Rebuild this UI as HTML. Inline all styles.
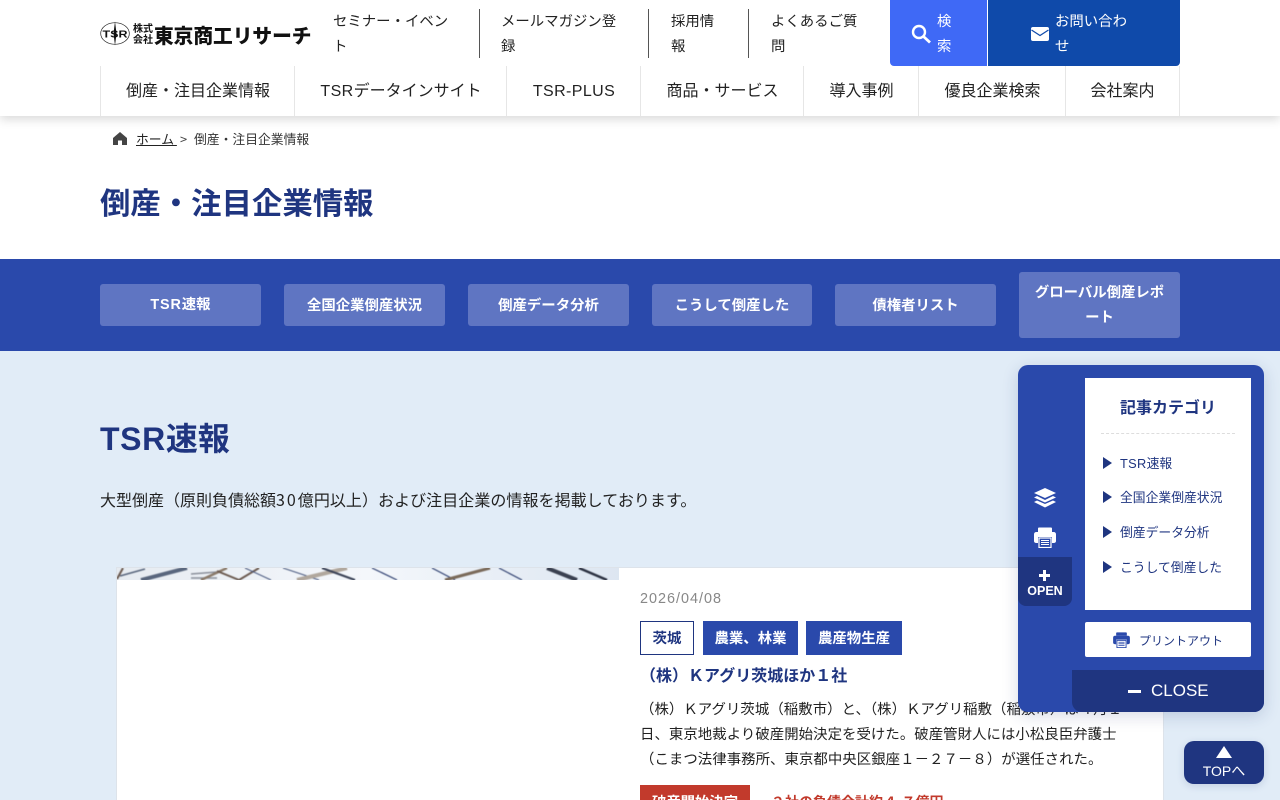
<!DOCTYPE html>
<html lang="ja"><head><meta charset="utf-8"><title>TSR速報</title>
<style>
*{box-sizing:border-box}
html,body{margin:0;padding:0;width:1280px;height:800px;overflow:hidden}
#w{position:absolute;left:0;top:0;width:1280px;height:800px;overflow:hidden;background:#e1ecf7;font-family:"Noto Sans CJK JP","Liberation Sans",sans-serif;color:#222}
.a{position:absolute;white-space:nowrap}
.l{font-family:"Liberation Sans",sans-serif;letter-spacing:.025em}
.lb{font-family:"Liberation Sans",sans-serif;letter-spacing:.06em;font-weight:700}
.c{position:absolute;display:flex;align-items:center;justify-content:center;text-align:center}
.nav{position:absolute;top:66px;height:50px;padding-bottom:4px;border-left:1px solid #e6e6e6;display:flex;align-items:center;justify-content:center;font-size:16px;color:#222;white-space:nowrap}
.top{position:absolute;top:8px;font-size:14.4px;line-height:25px;color:#222}
.sep{position:absolute;top:9px;width:1px;height:49px;background:#555}
.tab{position:absolute;background:#5f75c2;border-radius:3px;color:#fff;font-weight:700;font-size:14.4px;line-height:25px;padding-bottom:2px;display:flex;align-items:center;justify-content:center;text-align:center}
.tag{position:absolute;top:621px;height:34px;padding-bottom:2px;display:flex;align-items:center;justify-content:center;font-size:14.4px;font-weight:700;background:#2a49ab;color:#fff}
.li{position:absolute;left:1120px;font-size:12.8px;color:#1f3580;white-space:nowrap;line-height:18px}
.tri{position:absolute;left:1103px;width:0;height:0;border-left:9px solid #1f3580;border-top:6px solid transparent;border-bottom:6px solid transparent}
.ln{position:absolute;left:640px;font-size:14.4px;line-height:25px;letter-spacing:.06px;color:#222;white-space:nowrap}
</style></head><body><div id="w">
<div class="a" style="left:0;top:116px;width:1280px;height:143px;background:#fff"></div>
<div class="a" style="left:0;top:0;width:1280px;height:116px;background:#fff;box-shadow:0 3px 10px rgba(0,0,0,.16)"></div>

<svg class="a" style="left:100px;top:21px" width="30" height="25" viewBox="0 0 30 25"><ellipse cx="15" cy="12.500" rx="14.300" ry="10.800" fill="#fff" stroke="#222" stroke-width=".7"/><path d="M15 .5L16.500 12.500L15 24.500L13.500 12.500Z" fill="#111"/><text x="15" y="16.300" font-size="10.500" font-weight="700" text-anchor="middle" fill="#111" font-family="Liberation Sans,sans-serif" textLength="25" lengthAdjust="spacingAndGlyphs">TSR</text></svg>
<div class="a" style="left:133px;top:22px;font-size:10px;line-height:11px;font-weight:700;width:20px;color:#111">株式<br>会社</div>
<div class="a" style="left:154px;top:20px;font-size:19.700px;line-height:29px;font-weight:900;color:#111">東京商工リサーチ</div>

<div class="top" style="left:333px;width:125px">セミナー・イベント</div><div class="sep" style="left:479px"></div>
<div class="top" style="left:501px;width:126px">メールマガジン登録</div><div class="sep" style="left:648px"></div>
<div class="top" style="left:671px;width:56px">採用情報</div><div class="sep" style="left:748px"></div>
<div class="top" style="left:771px;width:98px">よくあるご質問</div>

<div class="a" style="left:890px;top:0;width:97px;height:66px;background:#3f69f6;border-radius:0 0 0 4px"></div>
<svg class="a" style="left:911px;top:24px" width="21" height="20" viewBox="0 0 21 20"><circle cx="8" cy="8" r="6" fill="none" stroke="#fff" stroke-width="2.400"/><path d="M12.500 12.500L19 18.500" stroke="#fff" stroke-width="2.800"/></svg>
<div class="a" style="left:937px;top:8px;width:15px;white-space:normal;font-size:14.400px;line-height:25px;color:#fff">検索</div>
<div class="a" style="left:988px;top:0;width:192px;height:66px;background:#0f4aaa;border-radius:0 0 4px 0"></div>
<svg class="a" style="left:1031px;top:27px" width="18" height="14" viewBox="0 0 18 14"><rect width="18" height="14" rx="2" fill="#fff"/><path d="M0.500 3L9 8.500L17.500 3" fill="none" stroke="#0f4aaa" stroke-width="1.200"/></svg>
<div class="a" style="left:1055px;top:8px;width:74px;white-space:normal;font-size:14.400px;line-height:25px;color:#fff">お問い合わせ</div>

<div class="nav" style="left:100px;width:195px">倒産・注目企業情報</div>
<div class="nav" style="left:294px;width:213px"><span><span class="l">TSR</span>データインサイト</span></div>
<div class="nav" style="left:506px;width:135px"><span><span class="l">TSR-PLUS</span></span></div>
<div class="nav" style="left:640px;width:164px">商品・サービス</div>
<div class="nav" style="left:803px;width:116px">導入事例</div>
<div class="nav" style="left:918px;width:148px">優良企業検索</div>
<div class="nav" style="left:1065px;width:115px;border-right:1px solid #e6e6e6">会社案内</div>

<svg class="a" style="left:113px;top:132px" width="14" height="13" viewBox="0 0 14 13"><path d="M7 0L14 6V13H9V8.500H5V13H0V6Z" fill="#444"/></svg>
<div class="a" style="left:136px;top:130px;font-size:12.800px;line-height:18px;color:#222"><span style="text-decoration:underline">ホーム&nbsp;</span></div>
<div class="a" style="left:180px;top:130px;font-size:12.800px;line-height:18px;color:#444">&gt;</div>
<div class="a" style="left:194px;top:130px;font-size:12.800px;line-height:18px;color:#333">倒産・注目企業情報</div>

<div class="a" style="left:100px;top:179px;font-size:30.400px;line-height:45px;font-weight:700;color:#1f3580">倒産・注目企業情報</div>

<div class="a" style="left:0;top:259px;width:1280px;height:92px;background:#2a49ab"></div>
<div class="tab" style="left:100px;top:284px;width:161px;height:42px"><span><span class="lb">TSR</span>速報</span></div>
<div class="tab" style="left:284px;top:284px;width:161px;height:42px">全国企業倒産状況</div>
<div class="tab" style="left:468px;top:284px;width:161px;height:42px">倒産データ分析</div>
<div class="tab" style="left:652px;top:284px;width:160px;height:42px">こうして倒産した</div>
<div class="tab" style="left:835px;top:284px;width:161px;height:42px">債権者リスト</div>
<div class="tab" style="left:1019px;top:272px;width:161px;height:66px;padding:0 12px 2px">グローバル倒産レポート</div>

<div class="a" style="left:100px;top:414px;font-size:32px;line-height:46px;font-weight:700;color:#1f3580"><span class="lb" style="letter-spacing:.02em">TSR</span>速報</div>
<div class="a" style="left:100px;top:486px;font-size:16px;line-height:26px;color:#222">大型倒産（原則負債総額<span style="letter-spacing:2px">30</span><span style="letter-spacing:.05px">億円以上）および注目企業の情報を掲載しております。</span></div>

<div class="a" style="left:116px;top:567px;width:1048px;height:233px;background:#fff;border:1px solid #dde3ea;border-bottom:0"></div>
<svg class="a" style="left:117px;top:568px" width="502" height="12" viewBox="0 0 502 12"><defs><linearGradient id="g" x1="0" x2="1"><stop offset="0" stop-color="#e6ebf1"/><stop offset=".5" stop-color="#f4f7fb"/><stop offset="1" stop-color="#dde6f1"/></linearGradient></defs><rect width="502" height="12" fill="url(#g)"/>
<g fill="none" style="filter:blur(.4px)"><path d="M0 11L6 0" stroke="#6b5a50" stroke-width="2"/><path d="M3 8L28 1" stroke="#59667d" stroke-width="1.500"/><path d="M24 12L70 0" stroke="#59667d" stroke-width="4"/><path d="M74 6L100 4M74 10L100 10" stroke="#8a8f9a" stroke-width="1.500"/><path d="M84 12L110 0" stroke="#8a7a6a" stroke-width="2.500"/><path d="M100 3L122 12M122 12L142 0" stroke="#6b5a50" stroke-width="2"/><path d="M128 0L154 12" stroke="#4a5a80" stroke-width="1"/><path d="M166 0L202 12" stroke="#4a5a80" stroke-width="1"/><path d="M180 12L230 0" stroke="#b0a79d" stroke-width="4"/><path d="M205 0L238 12" stroke="#3a4256" stroke-width="2"/><path d="M255 0L280 12" stroke="#2f4070" stroke-width="1.200"/><path d="M315 0L338 12" stroke="#2f4070" stroke-width="1.200"/><path d="M328 12L373 0" stroke="#7a6a5a" stroke-width="3"/><path d="M382 0L405 12" stroke="#2f4070" stroke-width="1.200"/><path d="M430 0L460 12" stroke="#3a4050" stroke-width="4"/><path d="M462 0L490 12" stroke="#2a3040" stroke-width="2.500"/></g></svg>

<div class="a" style="left:640px;top:589px;font-size:14.400px;line-height:20px;color:#888;letter-spacing:1px;font-family:'Liberation Sans',sans-serif">2026/04/08</div>
<div class="tag" style="left:640px;width:54px;background:#fff;border:1px solid #1f3580;color:#1f3580">茨城</div>
<div class="tag" style="left:703px;width:95px">農業、林業</div>
<div class="tag" style="left:806px;width:96px">農産物生産</div>
<div class="a" style="left:640px;top:661px;font-size:16px;line-height:26px;font-weight:700;color:#1f3580">（株）Ｋアグリ茨城ほか１社</div>
<div class="ln" style="top:696px">（株）Ｋアグリ茨城（稲敷市）と、（株）Ｋアグリ稲敷（稲敷市）は４月１</div>
<div class="ln" style="top:721px">日、東京地裁より破産開始決定を受けた。破産管財人には小松良臣弁護士</div>
<div class="ln" style="top:746px">（こまつ法律事務所、東京都中央区銀座１－２７－８）が選任された。</div>
<div class="c" style="left:640px;top:785px;width:110px;height:32px;background:#c23a2c;color:#fff;font-size:14.400px;font-weight:700">破産開始決定</div>
<div class="a" style="left:771px;top:790px;font-size:14px;line-height:24px;font-weight:700;color:#c23a2c">２社の負債合計約４.７億円</div>

<div class="a" style="left:1018px;top:365px;width:246px;height:347px;background:#2a49ab;border-radius:10px;box-shadow:0 4px 16px rgba(30,50,110,.18)"></div>
<div class="a" style="left:1085px;top:378px;width:166px;height:232px;background:#fff"></div>
<div class="a" style="left:1085px;top:395px;width:166px;text-align:center;font-size:16px;line-height:22px;font-weight:700;color:#1f3580">記事カテゴリ</div>
<div class="a" style="left:1101px;top:433px;width:134px;border-top:1px dashed #ddd"></div>
<div class="tri" style="top:457px"></div><div class="li" style="top:454px"><span class="l">TSR</span>速報</div>
<div class="tri" style="top:491px"></div><div class="li" style="top:488px">全国企業倒産状況</div>
<div class="tri" style="top:526px"></div><div class="li" style="top:523px">倒産データ分析</div>
<div class="tri" style="top:561px"></div><div class="li" style="top:558px">こうして倒産した</div>

<svg class="a" style="left:1034px;top:488px" width="22" height="20" viewBox="0 0 22 20"><path d="M11 0L22 5L11 10L0 5Z" fill="#fff"/><path d="M0 9.500L3 8L11 12L19 8L22 9.500L11 14.500Z" fill="#fff"/><path d="M0 14L3 12.500L11 16L19 12.500L22 14L11 19.500Z" fill="#fff"/></svg>
<svg class="a" style="left:1034px;top:527px" width="22" height="21" viewBox="0 0 22 21"><path d="M4 5V1.500Q4 .5 5 .5H17Q18 .5 18 1.500V5Z" fill="#fff"/><path d="M2.500 5H19.500Q22 5 22 7.500V14Q22 16 19.500 16H18V10H4V16H2.500Q0 16 0 14V7.500Q0 5 2.500 5Z" fill="#fff"/><rect x="5" y="11" width="12" height="9.500" fill="#2a49ab" stroke="#fff" stroke-width="1.200"/><path d="M7 13.500H15M7 15.500H15M7 17.500H15" stroke="#fff" stroke-width="1"/></svg>
<div class="a" style="left:1018px;top:557px;width:54px;height:49px;background:#1f3580;border-radius:0 0 8px 8px"></div>
<div class="a" style="left:1039px;top:574px;width:11px;height:3px;background:#fff"></div><div class="a" style="left:1043px;top:570px;width:3px;height:11px;background:#fff"></div>
<div class="a" style="left:1018px;top:582px;width:54px;text-align:center;font-size:12.500px;line-height:18px;font-weight:700;color:#fff;font-family:'Liberation Sans',sans-serif">OPEN</div>

<div class="a" style="left:1085px;top:622px;width:166px;height:35px;background:#fff;border-radius:2px"></div>
<svg class="a" style="left:1113px;top:632px" width="17" height="16" viewBox="0 0 22 21"><path d="M4 5V1.500Q4 .5 5 .5H17Q18 .5 18 1.500V5Z" fill="#2a49ab"/><path d="M2.500 5H19.500Q22 5 22 7.500V14Q22 16 19.500 16H18V10H4V16H2.500Q0 16 0 14V7.500Q0 5 2.500 5Z" fill="#2a49ab"/><rect x="5" y="11" width="12" height="9.500" fill="#fff" stroke="#2a49ab" stroke-width="1.200"/><path d="M7 13.500H15M7 15.500H15M7 17.500H15" stroke="#2a49ab" stroke-width="1"/></svg>
<div class="a" style="left:1139px;top:632px;font-size:12px;line-height:18px;color:#1f3580">プリントアウト</div>

<div class="a" style="left:1072px;top:670px;width:192px;height:42px;background:#1f3580;border-radius:0 0 10px 10px"></div>
<div class="a" style="left:1128px;top:690px;width:13px;height:3px;background:#fff"></div>
<div class="a" style="left:1151px;top:680px;font-size:17px;line-height:22px;color:#fff;font-family:'Liberation Sans',sans-serif">CLOSE</div>

<div class="a" style="left:1184px;top:741px;width:80px;height:43px;background:#1f3580;border-radius:10px;box-shadow:0 2px 8px rgba(30,50,110,.15)"></div>
<div class="a" style="left:1216px;top:746px;width:0;height:0;border-left:8px solid transparent;border-right:8px solid transparent;border-bottom:12px solid #fff"></div>
<div class="a" style="left:1184px;top:761px;width:80px;text-align:center;font-size:14px;line-height:20px;color:#fff"><span style="font-family:'Liberation Sans',sans-serif">TOP</span>へ</div>
</div></body></html>
